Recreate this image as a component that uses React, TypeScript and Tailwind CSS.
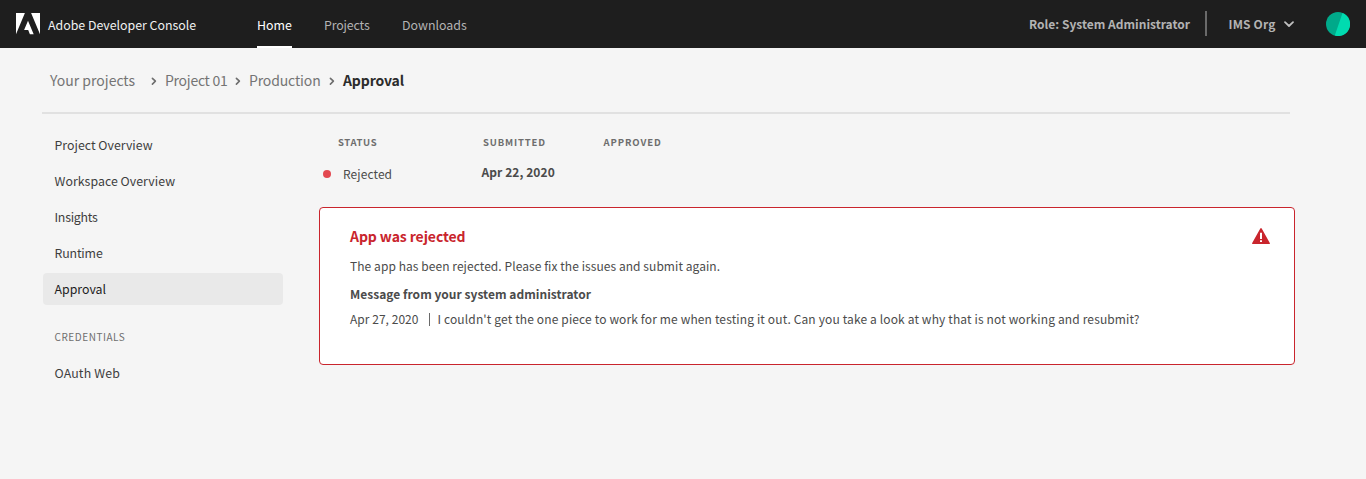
type NavItem = { label: string; className: string };

const sideLinks: NavItem[] = [
  { label: "Project Overview", className: "tracking-[0.01px]" },
  { label: "Workspace Overview", className: "tracking-[0.04px]" },
  { label: "Insights", className: "tracking-[-0.25px]" },
  { label: "Runtime", className: "tracking-[-0.16px]" },
];

function AdobeLogo() {
  return (
    <svg className="mt-[13px] h-[22px] w-6 shrink-0" viewBox="0 0 24 22" fill="#fff" aria-hidden="true">
      <path d="M0 0h8.9L0 21.2zM15.1 0H24v21.2zM12 7.8l5.7 13.4h-3.8l-1.7-4.3H8.1z" />
    </svg>
  );
}

function Chevron({ className }: { className: string }) {
  return (
    <svg className={className} viewBox="0 0 6 10" fill="none" stroke="#6e6e6e" strokeWidth="1.6" strokeLinecap="round" strokeLinejoin="round" aria-hidden="true">
      <path d="M1.4 2.3 4.4 5.2 1.4 8.1" />
    </svg>
  );
}

function Header() {
  return (
    <header className="flex h-12 items-start bg-[#1e1e1e] pl-4 pr-4 text-[12.4px] leading-[20px] text-[#b3b3b3]">
      <AdobeLogo />
      <span className="ml-2 mt-[15px] w-[209px] tracking-[-0.02px] text-[#f0f0f0]">Adobe Developer Console</span>
      <nav className="flex h-12">
        <a className="h-12 w-[35px] border-b-2 border-white pt-[15px] text-white">Home</a>
        <a className="ml-8 w-[46px] pt-[15px] tracking-[-0.16px]">Projects</a>
        <a className="ml-8 pt-[15px]">Downloads</a>
      </nav>
      <div className="ml-auto flex h-12 items-start">
        <span className="mt-[14px] w-[176px] text-[12px] font-bold">Role: System Administrator</span>
        <span className="mt-[11px] h-[25px] w-[2px] bg-[#6a6a6a]" />
        <span className="ml-[21.5px] mt-[14px] w-[54.5px] text-[12px] font-bold tracking-[0.17px]">IMS Org</span>
        <svg className="mt-[20px] h-[8px] w-[12px]" viewBox="0 0 12 8" fill="none" stroke="#c0c0c0" strokeWidth="1.8" strokeLinecap="round" strokeLinejoin="round" aria-hidden="true">
          <path d="M2 2.2 6 6l4-3.8" />
        </svg>
        <svg className="ml-[31px] mt-[12px] h-6 w-6" viewBox="0 0 24 24" aria-hidden="true">
          <circle cx="12" cy="12" r="12" fill="#00a98a" />
          <path d="M16.5.9A12 12 0 0 1 8.8 23.6z" fill="#00dbb0" />
        </svg>
      </div>
    </header>
  );
}

function Breadcrumbs() {
  return (
    <div className="flex h-6 items-center whitespace-nowrap text-[14px] leading-[24px] text-[#747474]">
      <span className="w-[101px]">Your projects</span>
      <Chevron className="mt-[2px] h-[10px] w-[6px]" />
      <span className="ml-2 w-[70px] tracking-[-0.27px]">Project 01</span>
      <Chevron className="mt-[2px] h-[10px] w-[6px]" />
      <span className="ml-2 w-[80px] tracking-[-0.14px]">Production</span>
      <Chevron className="mt-[2px] h-[10px] w-[6px]" />
      <span className="ml-2 font-bold tracking-[-0.12px] text-[#2c2c2c]">Approval</span>
    </div>
  );
}

function Sidebar() {
  return (
    <aside className="ml-[43px] flex w-60 flex-col gap-1 text-[12.35px] leading-[32px] text-[#3e3e3e]">
      {sideLinks.map((l) => (
        <a key={l.label} className="h-8 pl-[11.5px]">
          <span className={l.className}>{l.label}</span>
        </a>
      ))}
      <a className="h-8 rounded bg-[#e9e9e9] pl-[11.5px] text-[#1e1e1e]">Approval</a>
      <h2 className="mt-3 h-8 pl-[11.5px] text-[10px] font-normal tracking-[0.55px] text-[#6e6e6e]">CREDENTIALS</h2>
      <a className="h-8 pl-[11.5px] tracking-[0.14px]">OAuth Web</a>
    </aside>
  );
}

function StatusRow() {
  return (
    <div className="flex h-[78px] text-[#4b4b4b]">
      <div className="ml-1 w-[158.5px]">
        <h3 className="mt-[5px] pl-[15px] text-[9.5px] font-bold leading-[16px] tracking-[0.65px] text-[#6e6e6e]">STATUS</h3>
        <p className="mt-[14px] flex items-center text-[12px] leading-[20px] tracking-[0.08px]">
          <span className="mr-3 size-2 rounded-full bg-[#e34850]" />
          Rejected
        </p>
      </div>
      <div className="w-[122px]">
        <h3 className="mt-[5px] pl-[1.5px] text-[9.5px] font-bold leading-[16px] tracking-[0.85px] text-[#6e6e6e]">SUBMITTED</h3>
        <p className="mt-[12px] text-[12px] font-bold leading-[20px] tracking-[0.07px]">Apr 22, 2020</p>
      </div>
      <h3 className="mt-[5px] text-[9.5px] font-bold leading-[16px] tracking-[0.9px] text-[#6e6e6e]">APPROVED</h3>
    </div>
  );
}

function RejectionCard() {
  return (
    <section className="flex h-[158px] w-[976px] justify-between rounded border border-[#c9252d] bg-white pl-[30px] pr-6 text-[12px] leading-[20px] text-[#4b4b4b]">
      <div>
        <h1 className="mt-[16px] text-[14px] font-bold leading-[24px] tracking-[-0.09px] text-[#c9252d]">App was rejected</h1>
        <p className="mt-[8px] tracking-[0.065px]">The app has been rejected. Please fix the issues and submit again.</p>
        <h2 className="mt-[8px] font-bold tracking-[0.025px]">Message from your system administrator</h2>
        <p className="mt-[5px] flex items-center whitespace-nowrap">
          <span className="w-[79px] tracking-[0.036px]">Apr 27, 2020</span>
          <span className="mr-[7.5px] h-[13px] w-px bg-[#6a6a6a]" />
          <span className="tracking-[0.135px]">
            I couldn't get the one piece to work for me when testing it out. Can you take a look at why that is not working and resubmit?
          </span>
        </p>
      </div>
      <svg className="mt-[20px] h-4 w-[18px]" viewBox="0 0 18 16" aria-hidden="true">
        <path d="M8.3.5a.8.8 0 0 1 1.4 0l8.1 14.4a.7.7 0 0 1-.6 1.1H.8a.7.7 0 0 1-.6-1.1z" fill="#c9252d" />
        <path d="M8 4.8h2V11H8zM8 12.2h2v1.9H8z" fill="#fff" />
      </svg>
    </section>
  );
}

export default function App() {
  return (
    <div className="h-[479px] w-[1366px] overflow-hidden bg-[#f5f5f5] font-['Noto_Sans_CJK_SC',sans-serif]">
      <Header />
      <div className="pl-[50px] pt-[20px]">
        <Breadcrumbs />
      </div>
      <div className="ml-[42px] mt-[20px] h-[2px] w-[1248px] bg-[#e1e1e1]" />
      <div className="flex gap-9 pt-[15px]">
        <Sidebar />
        <main>
          <StatusRow />
          <RejectionCard />
        </main>
      </div>
    </div>
  );
}
